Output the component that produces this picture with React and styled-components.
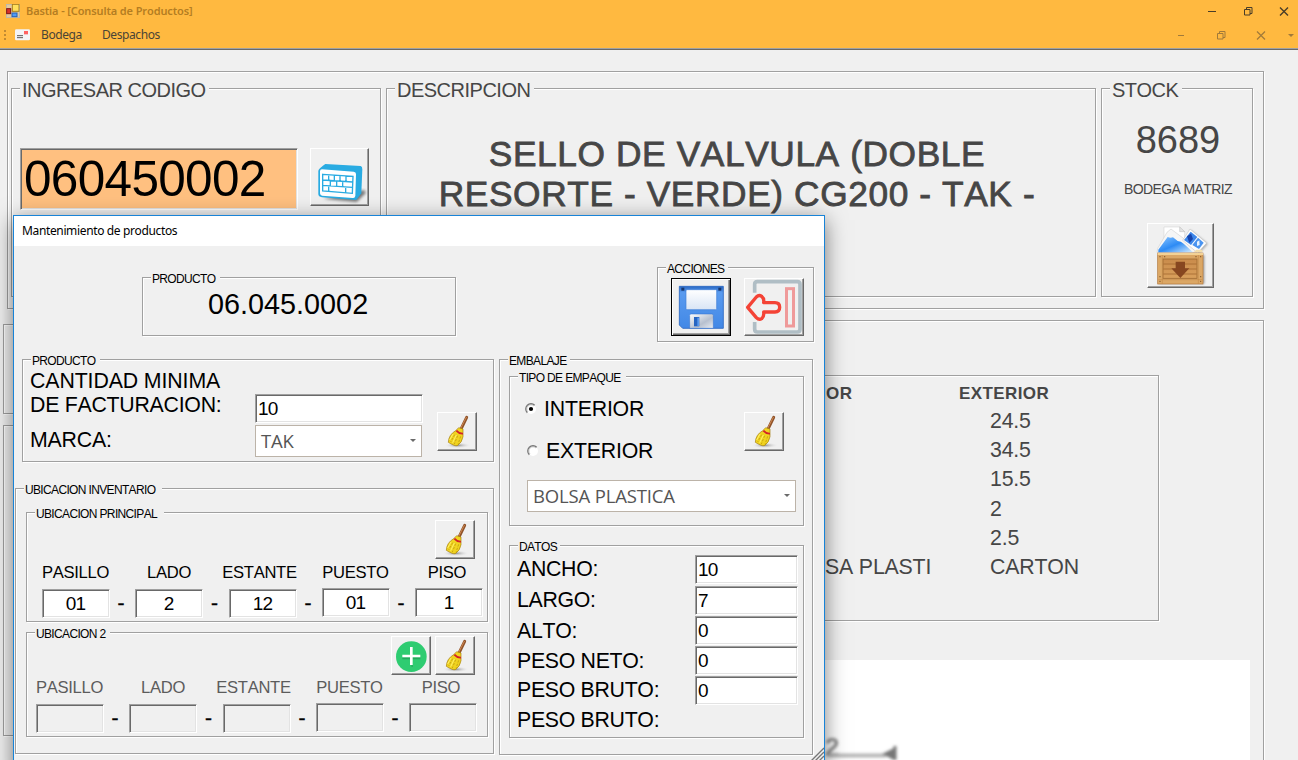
import React from "react";
import styled, { createGlobalStyle, css } from "styled-components";

const Global = createGlobalStyle`
  *, *::before, *::after { box-sizing: border-box; }
  html, body { margin: 0; height: 760px; overflow: hidden; background: #f0f0f0; }
  body { font-family: "Liberation Sans", Arial, sans-serif; font-kerning: none; color: #000; }
`;

const uiFont = css`font-family: "Noto Sans", "Open Sans", sans-serif;`;

/* ---------- application frame ---------- */
const Frame = styled.div`
  position: relative;
  width: 1298px;
  height: 760px;
  overflow: hidden;
  background: #f0f0f0;
  color: #464646;
`;
const Header = styled.header`
  height: 50px;
  background: #ffb940;
  border-bottom: 1px solid #696969;
  box-shadow: inset 0 -1px 0 #a0a0a0;
`;
const Bar = styled.div`
  display: flex;
  align-items: center;
  height: ${(p) => p.$h}px;
  padding-left: ${(p) => p.$left}px;
`;
const AppTitle = styled.span`
  ${uiFont}
  margin-left: 6px;
  font-size: 11px;
  font-weight: 600;
  line-height: 16px;
  letter-spacing: -0.12px;
  color: #b47d22;
  white-space: nowrap;
`;
const MenuItem = styled.span`
  ${uiFont}
  margin-left: ${(p) => p.$gap}px;
  font-size: 12px;
  line-height: 16px;
  letter-spacing: ${(p) => p.$ls}px;
  color: #4a4436;
`;
const Controls = styled.div`
  display: flex;
  margin-left: auto;
  svg { display: block; }
`;

/* ---------- shared widgets ---------- */
const GroupBox = styled.section`
  display: flex;
  flex-direction: column;
  flex: none;
  width: ${(p) => p.$w}px;
  height: ${(p) => p.$h}px;
  margin: ${(p) => p.$m || "0"};
  border: 1px solid #a0a0a0;
  box-shadow: 1px 1px 0 #fff, inset 1px 1px 0 #fff;
`;
const Legend = styled.div`
  position: relative;
  align-self: flex-start;
  flex: none;
  width: ${(p) => p.$w}px;
  margin-left: 8px;
  background: #f0f0f0;
  white-space: nowrap;
  ${(p) =>
    p.$big
      ? css`height: 24px; margin-top: -11px; margin-bottom: -13px; padding-left: 2px; line-height: 24px; font-size: 20px; letter-spacing: -0.5px;`
      : css`height: 14px; margin-top: -6px; margin-bottom: -8px; padding-left: 1px; line-height: 14px; font-size: 12px; letter-spacing: -0.65px;`}
`;
const Group = ({ title, lw, big, children, ...rest }) => (
  <GroupBox {...rest}>
    {title && <Legend $w={lw} $big={big}>{title}</Legend>}
    {children}
  </GroupBox>
);
const Row = styled.div`
  display: flex;
  align-items: flex-start;
  padding: ${(p) => p.$p || "0"};
`;
const Column = styled.div`
  display: flex;
  flex-direction: column;
  flex: none;
  width: ${(p) => (p.$w ? p.$w + "px" : "auto")};
  padding: ${(p) => p.$p || "0"};
`;
const Field = styled.div`
  display: flex;
  flex: none;
  align-items: center;
  justify-content: ${(p) => (p.$center ? "center" : "flex-start")};
  width: ${(p) => p.$w}px;
  height: ${(p) => p.$h || 29}px;
  margin-top: ${(p) => p.$mt || 0}px;
  padding-left: ${(p) => (p.$center ? 0 : 2)}px;
  padding-right: ${(p) => (p.$center ? 1 : 0)}px;
  border: 1px solid;
  border-color: #a0a0a0 #fff #fff #a0a0a0;
  box-shadow: inset 1px 1px 0 #696969, inset -1px -1px 0 #e3e3e3;
  background: ${(p) => (p.$off ? "#f0f0f0" : "#fff")};
  font-size: 19px;
  letter-spacing: -0.9px;
`;
const CodeField = styled(Field)`
  padding-left: 3px;
  padding-bottom: 2px;
  background: #ffc080;
  color: #000;
  font-size: 49.5px;
  letter-spacing: -0.68px;
`;
const Combo = styled.div`
  display: flex;
  align-items: center;
  justify-content: space-between;
  width: ${(p) => p.$w}px;
  height: 32px;
  margin: ${(p) => p.$m || "0"};
  padding: 0 5px 2px;
  border: 1px solid #bcb3a8;
  background: #fff;
  color: #555;
  font-family: "Open Sans", sans-serif;
  font-size: 18.5px;
  letter-spacing: -0.15px;
`;
const Arrow = () => (
  <svg width="6" height="4"><path d="M0 1H6L3 4Z" fill="#6a6a6a" /></svg>
);
const Button = styled.button`
  flex: none;
  display: block;
  width: ${(p) => p.$w}px;
  height: ${(p) => p.$h}px;
  margin: ${(p) => p.$m || "0"};
  padding: 0;
  background: #f0f0f0;
  border: 1px solid;
  border-color: ${(p) => (p.$focus ? "#000" : "#fff #696969 #696969 #fff")};
  box-shadow: ${(p) =>
    p.$focus
      ? "inset 1px 1px 0 #fff, inset -1px -1px 0 #696969, inset -2px -2px 0 #a0a0a0"
      : "inset -1px -1px 0 #a0a0a0"};
  svg { display: block; width: 100%; height: 100%; }
`;
const Label = styled.div`
  flex: none;
  height: ${(p) => p.$h || 24}px;
  margin-top: ${(p) => p.$mt || 0}px;
  font-size: 21.3px;
  line-height: 24px;
  letter-spacing: ${(p) => p.$ls ?? -0.1}px;
  white-space: nowrap;
`;

/* ---------- main form ---------- */
const Description = styled.div`
  padding: 45px 8px 0 0;
  text-align: center;
  font-size: 35.3px;
  line-height: 40px;
  letter-spacing: 0.6px;
  -webkit-text-stroke: 0.8px #464646;
`;
const StockValue = styled.div`
  margin: 31px 0 0 2px;
  text-align: center;
  font-size: 38px;
  line-height: 40px;
`;
const Warehouse = styled.div`
  margin: 21px 0 0 2px;
  text-align: center;
  font-size: 14px;
  line-height: 16px;
  letter-spacing: -0.6px;
`;
const Lower = styled.div`display: flex; align-items: flex-start;`;
const TableHead = styled.div`
  margin-bottom: 3px;
  font-size: 17px;
  font-weight: 700;
  line-height: 20px;
  letter-spacing: 0.4px;
`;
const Cell = styled.div`
  height: 29.2px;
  padding-left: ${(p) => p.$left}px;
  font-size: 21.3px;
  line-height: 29.2px;
  letter-spacing: -0.18px;
  white-space: nowrap;
`;
const Photo = styled.div`
  width: 690px;
  height: 120px;
  margin: 39px 0 0 142px;
  background: #fff;
  svg { display: block; margin-left: 240px; }
`;

/* ---------- dialog ---------- */
const Dialog = styled.div`
  position: absolute;
  left: 13px;
  top: 215px;
  width: 812px;
  height: 560px;
  border: 1px solid #1883d7;
  background: #f0f0f0;
  color: #000;
  box-shadow: 0 5px 20px rgba(0, 0, 0, 0.5);
`;
const DialogTitle = styled.div`
  ${uiFont}
  height: 30px;
  padding-left: 8px;
  background: #fff;
  font-size: 12px;
  line-height: 30px;
  letter-spacing: -0.36px;
`;
const ProductCode = styled.div`
  padding: 9px 0 0 65px;
  font-size: 28.8px;
  line-height: 34px;
`;
const Radio = styled.div`
  display: flex;
  align-items: center;
  gap: 7px;
  height: 24px;
  margin: ${(p) => p.$m};
`;
const Slots = styled.div`
  display: flex;
  align-items: flex-start;
  padding-left: ${(p) => p.$left}px;
  margin-top: ${(p) => p.$mt}px;
`;
const Slot = styled.div`
  display: flex;
  flex-direction: column;
  align-items: center;
  width: 68px;
`;
const SlotLabel = styled.div`
  height: 19px;
  margin-left: ${(p) => p.$shift}px;
  font-size: 16.6px;
  line-height: 20px;
  letter-spacing: -0.3px;
  white-space: nowrap;
  color: ${(p) => (p.$off ? "#5c5c5c" : "#000")};
`;
const Dash = styled.div`
  width: ${(p) => p.$w}px;
  padding: 28px 3px 0 0;
  text-align: center;
  font-size: 21px;
  line-height: 24px;
  -webkit-text-stroke: 0.4px #000;
`;
const Grip = styled.svg`
  position: absolute;
  right: 0;
  top: 531px;
`;

/* ---------- drawings ---------- */
const AppIcon = () => (
  <svg width="14" height="14" viewBox="0 0 42 42">
    <rect x="1" y="1" width="40" height="40" fill="#e5c99b" stroke="#b9b9b0" strokeWidth="3" />
    <rect x="19" y="1" width="20" height="21" fill="#ffe05c" stroke="#a9811c" strokeWidth="3" />
    <rect x="2" y="14" width="12" height="15" fill="#d8302a" stroke="#7e1712" strokeWidth="3" />
    <rect x="18" y="27" width="15" height="11" fill="#4f9bf5" stroke="#2460b8" strokeWidth="3" />
  </svg>
);
const Envelope = () => (
  <svg width="15" height="12" viewBox="0 0 45 36">
    <rect x="0" y="1" width="45" height="33" rx="4" fill="#f4f4f6" />
    <rect x="27" y="6" width="12" height="10" fill="#ff6161" />
    <path d="M6 20H24M6 26H24" stroke="#333" strokeWidth="2.4" />
  </svg>
);
const Keyboard = () => (
  <svg viewBox="33 27 171 168">
    <defs><filter id="kb"><feGaussianBlur stdDeviation="5" /></filter></defs>
    <path d="M70 176L170 186L198 158L192 150Z" fill="#777" filter="url(#kb)" />
    <path d="M55 92Q56 86 76 72L182 78Q187 79 187 88L184 160L169 180L66 172Q55 170 55 162Z" fill="#29abe2" />
    <path d="M60 94Q60 88 66 88L161 95Q168 96 168 102L166 168Q165 175 158 174L66 167Q60 166 60 160Z" fill="#fff" />
    <g fill="none" stroke="#29abe2" strokeWidth="4">
      <path d="M68 103L159 109L157 160L68 153ZM68 120L158 126M68 136L157 142M86 104V120M103 105V122M120 106V123M138 108V125M91 121V137M110 122V139M128 124V140M86 137V154M137 141V158" />
    </g>
  </svg>
);
const Crate = () => (
  <svg viewBox="23 27 195 189">
    <defs>
      <linearGradient id="blue" x1="0" y1="0" x2="1" y2="1">
        <stop offset="0" stopColor="#8cc6ff" /><stop offset=".5" stopColor="#2d8bf5" /><stop offset="1" stopColor="#d8efff" />
      </linearGradient>
      <linearGradient id="wood" x1="0" y1="0" x2="0" y2="1">
        <stop offset="0" stopColor="#c98b4b" /><stop offset="1" stopColor="#d9a05c" />
      </linearGradient>
      <filter id="cs"><feGaussianBlur stdDeviation="2.5" /></filter>
    </defs>
    <path d="M56 120H192V206H56Z" fill="#999" filter="url(#cs)" />
    <path d="M150 44L203 86L178 114L140 108Z" fill="#aaa" filter="url(#cs)" />
    <path d="M71 36H118L133 50V110H71Z" fill="#fff" stroke="#cfcfcf" strokeWidth="1.5" />
    <path d="M118 36V50H133Z" fill="#e4e4e4" stroke="#bbb" strokeWidth="1.5" />
    <path d="M80 52L92 42L140 78L172 112H50L52 100Z" fill="#f6f6f6" stroke="#c8c8c8" strokeWidth="1.5" />
    <path d="M54 104L82 66Q90 70 98 67L112 78Q122 78 130 86L158 112H54Z" fill="url(#blue)" />
    <path d="M149 42L199 84L172 114L127 76Z" fill="#fdfdfd" stroke="#bbb" strokeWidth="1.5" />
    <path d="M151 50L171 66L152 90L131 75Z" fill="#3d87ea" />
    <path d="M140 64L152 56L158 72L147 84Z" fill="#1745ad" />
    <path d="M173 68L190 83L176 102L156 90Z" fill="#4a94f0" />
    <path d="M170 80L177 76L178 90L170 93Z" fill="#e6f2ff" />
    <path d="M160 112L168 104H186V112Z" fill="#f2dfae" />
    <rect x="52" y="114" width="136" height="93" fill="#dba765" stroke="#b57a3e" strokeWidth="2" />
    <path d="M52 114H188V120H52Z" fill="#f3d295" />
    <rect x="68" y="132" width="102" height="58" fill="url(#wood)" stroke="#a06a32" strokeWidth="2.5" />
    <path d="M69 147H169M69 162H169M69 177H169" stroke="#a56a31" strokeWidth="2.5" />
    <path d="M54 194H186M66 120V206M174 120V206" stroke="#bd8345" strokeWidth="1.5" />
    <path d="M106 140H134V160H147L120 189L93 160H106Z" fill="#874720" />
    <g fill="#7a5227">
      <circle cx="59" cy="125" r="2" /><circle cx="73" cy="125" r="2" /><circle cx="167" cy="125" r="2" /><circle cx="181" cy="125" r="2" />
      <circle cx="59" cy="185" r="2" /><circle cx="181" cy="185" r="2" /><circle cx="59" cy="199" r="2" /><circle cx="181" cy="199" r="2" />
    </g>
  </svg>
);
const Floppy = () => (
  <svg viewBox="51 57 174 168">
    <defs>
      <linearGradient id="fb" x1="0" y1="0" x2="0" y2="1"><stop offset="0" stopColor="#2968c4" /><stop offset=".15" stopColor="#5a9bef" /><stop offset="1" stopColor="#4288e6" /></linearGradient>
      <linearGradient id="fl" x1="0" y1="0" x2="0" y2="1"><stop offset="0" stopColor="#fff" /><stop offset="1" stopColor="#d9e5f5" /></linearGradient>
      <linearGradient id="fm" x1="0" y1="0" x2="1" y2="1"><stop offset="0" stopColor="#fff" /><stop offset=".6" stopColor="#b7c0cf" /><stop offset="1" stopColor="#e9edf3" /></linearGradient>
    </defs>
    <path d="M73 79H205V205H83L73 195Z" fill="url(#fb)" stroke="#2b68c2" strokeWidth="2.5" />
    <rect x="93" y="89" width="92" height="60" rx="3" fill="url(#fl)" stroke="#3f7ed6" strokeWidth="2" />
    <rect x="79" y="83" width="9" height="9" fill="#17366e" /><rect x="190" y="83" width="9" height="9" fill="#17366e" />
    <path d="M104 205V166Q104 162 108 162H170Q175 162 175 166V205Z" fill="url(#fm)" stroke="#2f6fce" strokeWidth="1.5" />
    <rect x="117" y="171" width="16" height="28" fill="#2765c2" />
    <path d="M127 173H132V198H127Z" fill="#5a9bef" />
  </svg>
);
const Exit = () => (
  <svg viewBox="270 57 174 168">
    <path d="M299 98V73Q299 65 307 65H427Q435 65 435 73V208Q435 216 427 216H307Q299 216 299 208V186" fill="none" stroke="#b0bec5" strokeWidth="11" />
    <rect x="394.500" y="86" width="21" height="112" fill="none" stroke="#ef9a9a" strokeWidth="9" />
    <path d="M278 142L304 111Q312 103 320 109Q328 115 326 128H360Q374 128 374 142Q374 156 360 156H326Q328 169 320 176Q312 181 304 173Z" fill="#f0f0f0" stroke="#f44336" strokeWidth="10" strokeLinejoin="round" />
  </svg>
);
const Broom = () => (
  <svg viewBox="168 33 114 111">
    <defs>
      <radialGradient id="bs"><stop offset="0" stopColor="#8c8c8c" /><stop offset="1" stopColor="#f0f0f0" stopOpacity="0" /></radialGradient>
    </defs>
    <ellipse cx="227" cy="130" rx="40" ry="9" fill="url(#bs)" />
    <path d="M238 79L254 46" stroke="#8f5228" strokeWidth="9" strokeLinecap="round" />
    <path d="M237 77L253 46" stroke="#d08a55" strokeWidth="3" strokeLinecap="round" />
    <path d="M230 77L243 81L243 104Q240 122 226 131Q218 133 199 121Q200 98 221 86Z" fill="#f0d31f" stroke="#a37c0c" strokeWidth="2" />
    <path d="M223 86Q232 96 243 95" stroke="#d2222a" strokeWidth="5.500" fill="none" />
    <path d="M218 98L206 120M227 101L217 126M236 103L228 127" stroke="#b5900f" strokeWidth="2" strokeDasharray="7 4" fill="none" />
    <path d="M213 96L203 114M223 99L212 122" stroke="#fff06b" strokeWidth="3" fill="none" />
  </svg>
);
const Plus = () => (
  <svg viewBox="36 381 114 111">
    <circle cx="94" cy="440" r="46" fill="#2ecc71" />
    <path d="M67 445H121M94 468H99" stroke="#27a55e" strokeWidth="5" />
    <path d="M94 411V465M67 438H121" stroke="#fff" strokeWidth="8" />
  </svg>
);
const RadioMark = ({ on }) => (
  <svg width="12" height="12" viewBox="0 0 12 12">
    <circle cx="6" cy="6" r="5" fill="#fff" />
    <path d="M2.300 9.700A5.200 5.200 0 0 1 9.700 2.300" fill="none" stroke="#777" strokeWidth="1.300" />
    <path d="M3 9A4.200 4.200 0 0 1 9 3" fill="none" stroke="#a8a8a8" strokeWidth=".7" />
    {on && <circle cx="6" cy="6" r="2.100" fill="#000" />}
  </svg>
);

const BroomButton = ({ m }) => <Button $w={40} $h={39} $m={m}><Broom /></Button>;

const slotDefs = [
  { name: "PASILLO", shift: -1, dash: 25, mt: 7 },
  { name: "LADO", shift: 0, dash: 26, mt: 7 },
  { name: "ESTANTE", shift: -7, dash: 25, mt: 7 },
  { name: "PUESTO", shift: -1, dash: 25, mt: 6 },
  { name: "PISO", shift: -4, dash: 0, mt: 6 },
];
const Location = ({ values, off, left, mt }) => (
  <Slots $left={left} $mt={mt}>
    {slotDefs.map((s, i) => (
      <React.Fragment key={s.name}>
        <Slot>
          <SlotLabel $shift={s.shift} $off={off}>{s.name}</SlotLabel>
          <Field $w={68} $mt={s.mt} $off={off} $center>{values[i]}</Field>
        </Slot>
        {s.dash > 0 && <Dash $w={s.dash}>-</Dash>}
      </React.Fragment>
    ))}
  </Slots>
);

const measures = [
  ["ANCHO:", 31, "10", 0],
  ["LARGO:", 31, "7", 2],
  ["ALTO:", 30, "0", 1],
  ["PESO NETO:", 29, "0", 1],
  ["PESO BRUTO:", 30, "0", 1],
  ["PESO BRUTO:", 24, null, 0],
];

function MaintenanceDialog() {
  return (
    <Dialog>
      <DialogTitle>Mantenimiento de productos</DialogTitle>
      <Row>
        <Group title="PRODUCTO" lw={69} $w={314} $h={59} $m="31px 0 0 128px">
          <ProductCode>06.045.0002</ProductCode>
        </Group>
        <Group title="ACCIONES" lw={62} $w={157} $h={75} $m="21px 0 0 201px">
          <Row $p="10px 0 0 13px">
            <Button $w={60} $h={58} $focus><Floppy /></Button>
            <Button $w={60} $h={58} $m="0 0 0 13px"><Exit /></Button>
          </Row>
        </Group>
      </Row>
      <Row>
        <Column $w={480}>
          <Group title="PRODUCTO" lw={69} $w={472} $h={103} $m="17px 0 0 8px">
            <Row>
              <Column $w={232} $p="9px 0 0 7px">
                <Label>CANTIDAD MINIMA</Label>
                <Label $ls={-0.25}>DE FACTURACION:</Label>
                <Label $mt={11} $ls={-0.2}>MARCA:</Label>
              </Column>
              <Column $p="34px 0 0">
                <Field $w={168}>10</Field>
                <Combo $w={167} $m="2px 0 0">TAK<Arrow /></Combo>
              </Column>
              <BroomButton m="52px 0 0 14px" />
            </Row>
          </Group>
          <Group title="UBICACION INVENTARIO" lw={138} $w={479} $h={266} $m="26px 0 0 1px">
            <Group title="UBICACION PRINCIPAL" lw={129} $w={462} $h={110} $m="23px 0 0 10px">
              <Row $p="7px 0 0 408px"><BroomButton /></Row>
              <Location values={["01", "2", "12", "01", "1"]} left={15} mt={4} />
            </Group>
            <Group title="UBICACION 2" lw={75} $w={462} $h={105} $m="10px 0 0 10px">
              <Row $p="3px 0 0 364px">
                <Button $w={40} $h={39}><Plus /></Button>
                <BroomButton m="0 0 0 4px" />
              </Row>
              <Location values={[]} off left={9} mt={3} />
            </Group>
          </Group>
        </Column>
        <Group title="EMBALAJE" lw={62} $w={314} $h={396} $m="17px 0 0 5px">
          <Group title="TIPO DE EMPAQUE" lw={108} $w={295} $h={150} $m="16px 0 0 9px">
            <Row>
              <Column $w={234}>
                <Radio $m="20px 0 0 15px"><RadioMark on /><Label $ls={-0.2}>INTERIOR</Label></Radio>
                <Radio $m="18px 0 0 17px"><RadioMark /><Label $ls={-0.2}>EXTERIOR</Label></Radio>
              </Column>
              <BroomButton m="35px 0 0" />
            </Row>
            <Combo $w={269} $m="17px 0 0 17px">BOLSA PLASTICA<Arrow /></Combo>
          </Group>
          <Group title="DATOS" lw={42} $w={295} $h={193} $m="19px 0 0 9px">
            <Row>
              <Column $w={185} $p="11px 0 0 7px">
                {measures.map(([name, h], i) => <Label key={i} $h={h} $ls={-0.3}>{name}</Label>)}
              </Column>
              <Column $p="9px 0 0">
                {measures.map(([, , value, mt], i) => value !== null && <Field key={i} $w={103} $mt={mt}>{value}</Field>)}
              </Column>
            </Row>
          </Group>
        </Group>
      </Row>
      <Grip width="13" height="14">
        <path d="M0 14L13 1M4 14L13 5M8 14L13 9" stroke="#777" strokeWidth="1.400" />
      </Grip>
    </Dialog>
  );
}

export default function App() {
  return (
    <>
      <Global />
      <Frame>
        <Header>
          <Bar $h={21} $left={6}>
            <AppIcon />
            <AppTitle>Bastia - [Consulta de Productos]</AppTitle>
            <Controls>
              <svg width="92" height="12" fill="none" stroke="#493d28" strokeWidth="1">
                <path d="M2 6.500H10" />
                <path d="M38.500 4.500h5.500v5.500h-5.500zM40.500 4.500V2.500H46V8.500H44" />
                <path d="M74 2.500L82 10.500M82 2.500L74 10.500" strokeWidth="1.400" />
              </svg>
            </Controls>
          </Bar>
          <Bar $h={27} $left={4}>
            <svg width="2" height="10"><path d="M0 0h2v2h-2zM0 4h2v2h-2zM0 8h2v2h-2z" fill="#c08a33" /></svg>
            <Row $p="0 0 0 9px"><Envelope /></Row>
            <MenuItem $gap={11} $ls={-0.4}>Bodega</MenuItem>
            <MenuItem $gap={20} $ls={-0.4}>Despachos</MenuItem>
            <Controls>
              <svg width="122" height="12" fill="none" stroke="#a17a3a" strokeWidth="1">
                <path d="M2 6.500H8" />
                <path d="M41.500 4.500h5.500v5.500h-5.500zM43.500 4.500V2.500H49V8.500H47" />
                <path d="M81 2.500L89 10.500M89 2.500L81 10.500" strokeWidth="1.200" />
                <path d="M112 5h6l-3 3z" fill="#a17a3a" stroke="none" />
              </svg>
            </Controls>
          </Bar>
        </Header>

        <Group $w={1257} $h={238} $m="21px 0 0 7px">
          <Row $p="16px 0 0 3px">
            <Group title="INGRESAR CODIGO" lw={189} big $w={370} $h={209}>
              <Row $p="59px 0 0 8px">
                <CodeField $w={278} $h={62}>060450002</CodeField>
                <Button $w={59} $h={58} $m="0 0 0 12px"><Keyboard /></Button>
              </Row>
            </Group>
            <Group title="DESCRIPCION" lw={139} big $w={710} $h={209} $m="0 5px">
              <Description>
                SELLO DE VALVULA (DOBLE<br />RESORTE - VERDE) CG200 - TAK -
              </Description>
            </Group>
            <Group title="STOCK" lw={72} big $w={152} $h={209}>
              <StockValue>8689</StockValue>
              <Warehouse>BODEGA MATRIZ</Warehouse>
              <Button $w={67} $h={65} $m="26px 0 0 45px"><Crate /></Button>
            </Group>
          </Row>
        </Group>

        <Lower>
          <Column $w={417} $p="15px 0 0 3px">
            <Group $w={400} $h={90} />
            <Group $w={400} $h={311} $m="11px 0 0" />
          </Column>
          <Group $w={847} $h={500} $m="11px 0 0">
            <Group $w={679} $h={246} $m="54px 0 0 62px">
              <Row $p="8px 0 0 287px">
                <Column $w={191}>
                  <TableHead>INTERIOR</TableHead>
                  <Cell /><Cell /><Cell /><Cell /><Cell />
                  <Cell $left={15}>BOLSA PLASTI</Cell>
                </Column>
                <Column>
                  <TableHead>EXTERIOR</TableHead>
                  {["24.5", "34.5", "15.5", "2", "2.5", "CARTON"].map((v) => <Cell key={v} $left={31}>{v}</Cell>)}
                </Column>
              </Row>
            </Group>
            <Photo>
              <svg width="120" height="100">
                <defs><filter id="soft"><feGaussianBlur stdDeviation="1.400" /></filter></defs>
                <g filter="url(#soft)">
                  <text x="25" y="96" fontSize="26" fontWeight="700" fill="#8f8f8f">2</text>
                  <path d="M28 95.500H86" stroke="#b5b5b5" strokeWidth="4" />
                  <path d="M82 94L94 88V100Z" fill="#777" />
                  <path d="M95 86V100" stroke="#777" strokeWidth="3" />
                </g>
              </svg>
            </Photo>
          </Group>
        </Lower>
        <MaintenanceDialog />
      </Frame>
    </>
  );
}
